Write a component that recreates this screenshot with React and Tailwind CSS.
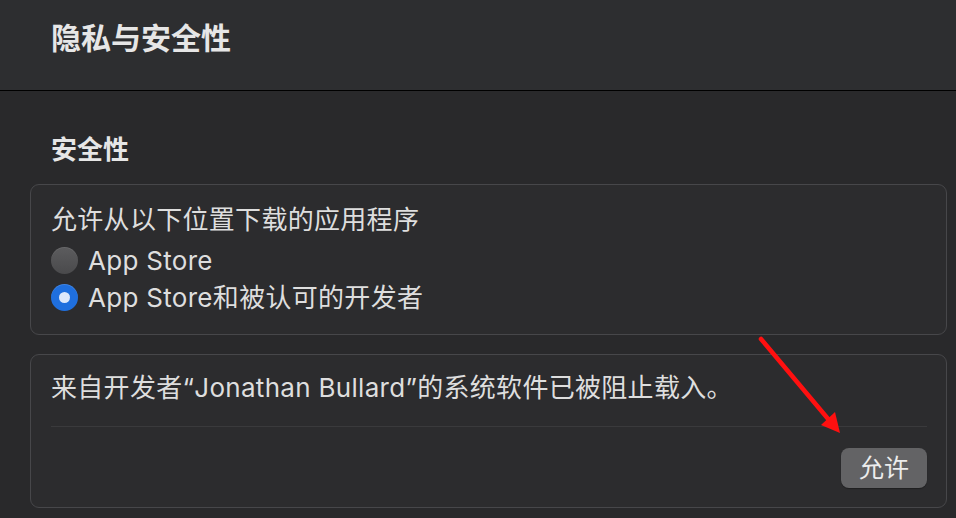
import React from "react";

const font = { fontFamily: '"Inter", "Noto Sans CJK SC", sans-serif' };

function Radio({ checked }) {
  if (checked) {
    return (
      <div className="w-[27px] h-[27px] rounded-full bg-[#1f6fde] flex items-center justify-center shadow-[inset_0_1px_0_rgba(255,255,255,0.15)]">
        <div className="w-[11px] h-[11px] rounded-full bg-[#dde8fb]" />
      </div>
    );
  }
  return (
    <div className="w-[27px] h-[27px] rounded-full bg-gradient-to-b from-[#5c5c5e] to-[#4a4a4c] shadow-[inset_0_1px_0_rgba(255,255,255,0.08)]" />
  );
}

export default function App() {
  return (
    <div className="relative w-[956px] h-[518px] bg-[#29292b] overflow-hidden text-[#dedede]" style={font}>
      <div className="h-[91px] bg-[#2d2e30] border-b border-black pl-[51px] pt-[20px]">
        <div className="text-[30px] leading-[36px] font-bold text-[#e6e6e6]">隐私与安全性</div>
      </div>
      <div className="pt-[43px] pl-[30px] pr-[9px]">
        <div className="pl-[21px] text-[26px] leading-[32px] font-bold text-[#e6e6e6] mb-[18px]">安全性</div>
        <div className="rounded-[9px] border border-[#47474a] bg-[#2c2c2e] pt-[17px] pb-[18px] px-[20px] tracking-[0.3px]">
          <div className="text-[26px] leading-[36px]">允许从以下位置下载的应用程序</div>
          <div className="mt-[4px] flex items-center gap-[10px] h-[37px]">
            <Radio checked={false} />
            <span className="text-[26px] leading-[36px]">App Store</span>
          </div>
          <div className="flex items-center gap-[10px] h-[37px]">
            <Radio checked />
            <span className="text-[26px] leading-[36px]">App Store和被认可的开发者</span>
          </div>
        </div>
        <div className="mt-[19px] rounded-[9px] border border-[#47474a] bg-[#2c2c2e] pt-[15px] pb-[19px] pl-[20px] pr-[19px]">
          <div className="text-[26px] leading-[36px] tracking-[0.3px]">来自开发者“Jonathan Bullard”的系统软件已被阻止载入。</div>
          <div className="mt-[20px] h-px bg-[#3a3a3c]" />
          <div className="mt-[21px] flex justify-end">
            <button className="w-[86px] h-[40px] rounded-[8px] bg-[#636365] text-[25px] leading-[30px] text-[#ececec] shadow-[0_1px_1px_rgba(0,0,0,0.3)]" style={font}>允许</button>
          </div>
        </div>
      </div>
      <svg className="absolute left-0 top-0 pointer-events-none" width="956" height="518">
        <line x1="761" y1="339" x2="829" y2="420" stroke="#ff1010" strokeWidth="4.5" strokeLinecap="round" />
        <polygon points="840,433 821,425 835,412" fill="#ff1010" />
      </svg>
    </div>
  );
}
